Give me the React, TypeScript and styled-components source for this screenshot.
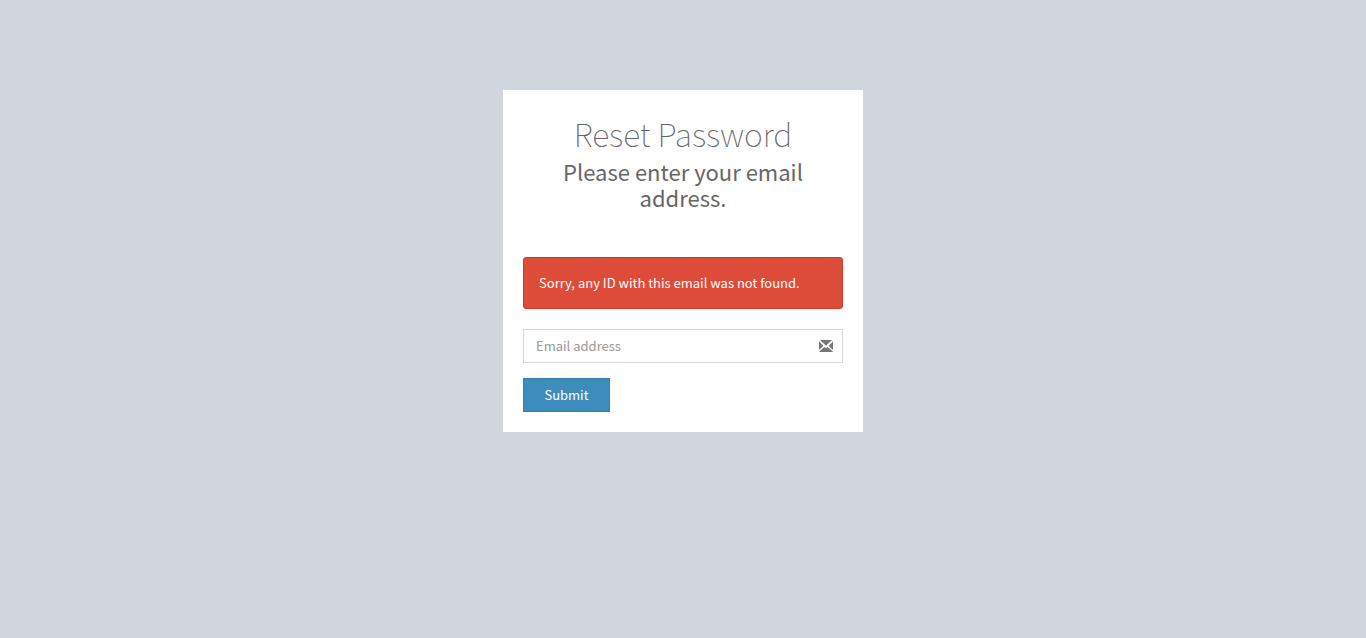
import React from "react";
import styled, { createGlobalStyle } from "styled-components";

const GlobalStyle = createGlobalStyle`
  *, *::before, *::after { box-sizing: border-box; }
  body {
    margin: 0;
    background: #d2d6de;
    color: #333;
    font-family: "Source Sans Pro", "Noto Sans CJK SC", "Noto Sans", sans-serif;
    font-size: 13px;
    line-height: 20px;
  }
`;

const Page = styled.main`
  display: flex;
  justify-content: center;
  align-items: flex-start;
  min-height: 100vh;
  padding: 90px 16px 32px;
`;

const Card = styled.section`
  width: 100%;
  max-width: 360px;
  padding: 20px;
  background: #fff;
  color: #666;
`;

const Header = styled.header`
  padding: 3px 20px 47px;
  text-align: center;
`;

const Title = styled.h1`
  margin: 0 0 5px;
  font-size: 32px;
  font-weight: 100;
  line-height: 40px;
`;

const Lead = styled.p`
  margin: 0;
  font-size: 22px;
  line-height: 26px;
`;

const Alert = styled.div`
  margin-bottom: 20px;
  padding: 15px;
  border: 1px solid #d73925;
  border-radius: 3px;
  background: #dd4b39;
  color: #fff;
`;

const Field = styled.div`
  position: relative;
  margin-bottom: 15px;
`;

const TextInput = styled.input`
  display: block;
  width: 100%;
  height: 34px;
  padding: 5px 42px 7px 12px;
  border: 1px solid #d2d6de;
  border-radius: 0;
  background: #fff;
  color: #555;
  font-family: inherit;
  font-size: 13px;

  &::placeholder { color: #999; opacity: 1; }
`;

const FieldIcon = styled.svg`
  position: absolute;
  top: 10px;
  right: 10px;
  width: 14px;
  height: 14px;
  fill: #777;
  pointer-events: none;
`;

const SubmitButton = styled.button`
  display: block;
  min-width: 87px;
  height: 34px;
  padding: 0 20px 2px;
  border: 1px solid #367fa9;
  background: #3c8dbc;
  color: #fff;
  font-family: inherit;
  font-size: 13px;
  cursor: pointer;
`;

export default function App() {
  return (
    <>
      <GlobalStyle />
      <Page>
        <Card>
          <Header>
            <Title>Reset Password</Title>
            <Lead>Please enter your email address.</Lead>
          </Header>
          <Alert role="alert">Sorry, any ID with this email was not found.</Alert>
          <form onSubmit={(e: React.FormEvent) => e.preventDefault()}>
            <Field>
              <TextInput type="email" aria-label="Email address" placeholder="Email address" />
              <FieldIcon viewBox="0 0 14 14" aria-hidden="true">
                <path d="M1 1H13L7 6.8ZM0 2.2L4.4 6.7L0 11ZM14 2.2V11L9.6 7ZM0 13V12.8L5.4 7.9L7 9.3L8.6 7.9L14 12.8V13Z" />
              </FieldIcon>
            </Field>
            <SubmitButton type="submit">Submit</SubmitButton>
          </form>
        </Card>
      </Page>
    </>
  );
}
